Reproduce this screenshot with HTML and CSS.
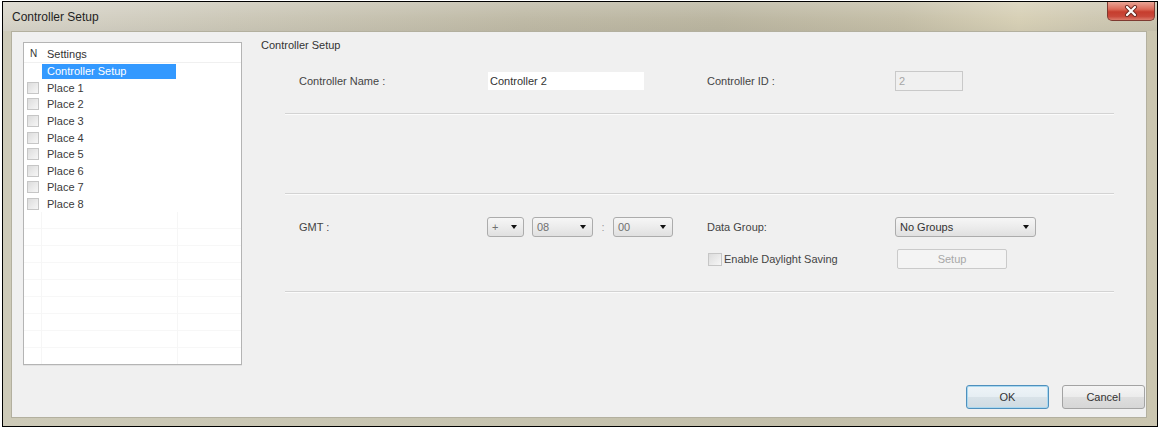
FILE: index.html
```html
<!DOCTYPE html>
<html>
<head>
<meta charset="utf-8">
<title>Controller Setup</title>
<link rel="stylesheet" href="styles.css">
</head>
<body>
<div class="window">
  <div class="titlebar">
    <span class="title">Controller Setup</span>
    <div class="close">
      <svg width="14" height="12" viewBox="0 0 14 12">
        <path d="M3 2 L11 10 M11 2 L3 10" stroke="#6b2a22" stroke-width="4" stroke-linecap="round"/>
        <path d="M3 2 L11 10 M11 2 L3 10" stroke="#ffffff" stroke-width="2.2" stroke-linecap="round"/>
      </svg>
    </div>
  </div>
  <div class="frame">
    <div class="client">
      <div class="listbox">
        <div class="lb-header"><span class="col-n">N</span><span class="col-name">Settings</span></div>
        <div class="lb-row"><span class="sel">Controller Setup</span></div>
        <div class="lb-row"><span class="cb"></span><span class="lb-text">Place 1</span></div>
        <div class="lb-row"><span class="cb"></span><span class="lb-text">Place 2</span></div>
        <div class="lb-row"><span class="cb"></span><span class="lb-text">Place 3</span></div>
        <div class="lb-row"><span class="cb"></span><span class="lb-text">Place 4</span></div>
        <div class="lb-row"><span class="cb"></span><span class="lb-text">Place 5</span></div>
        <div class="lb-row"><span class="cb"></span><span class="lb-text">Place 6</span></div>
        <div class="lb-row"><span class="cb"></span><span class="lb-text">Place 7</span></div>
        <div class="lb-row"><span class="cb"></span><span class="lb-text">Place 8</span></div>
        <div class="lb-fill"></div>
      </div>
      <div class="main">
        <div class="section-title">Controller Setup</div>
        <div class="form-row row1">
          <span class="label">Controller Name :</span>
          <div class="text-input">Controller 2</div>
          <span class="label">Controller ID :</span>
          <div class="id-input">2</div>
        </div>
        <div class="sep sep1"></div>
        <div class="sep sep2"></div>
        <div class="form-row row-gmt">
          <span class="label">GMT :</span>
          <div class="gmt-group">
            <div class="select sel-sign muted"><span>+</span><span class="arrow"></span></div>
            <div class="select sel-hour muted"><span>08</span><span class="arrow"></span></div>
            <span class="colon">:</span>
            <div class="select sel-min muted"><span>00</span><span class="arrow"></span></div>
          </div>
          <span class="label">Data Group:</span>
          <div class="select sel-group"><span>No Groups</span><span class="arrow"></span></div>
        </div>
        <div class="form-row row-dst">
          <span></span>
          <span></span>
          <div class="check-label"><span class="cb cb-dst"></span><span>Enable Daylight Saving</span></div>
          <div class="btn-disabled">Setup</div>
        </div>
        <div class="sep sep3"></div>
        <div class="buttons">
          <div class="btn btn-default">OK</div>
          <div class="btn">Cancel</div>
        </div>
      </div>
    </div>
  </div>
</div>
</body>
</html>
```
FILE: styles.css
```css
html, body {
  margin: 0;
  padding: 0;
  background: #ffffff;
}

body {
  font-family: "Liberation Sans", Arial, sans-serif;
  font-size: 11px;
  color: #3a3a3a;
}

.window {
  box-sizing: border-box;
  width: 1156px;
  height: 426px;
  margin: 1px 0 0 2px;
  border: 1px solid #000;
  display: flex;
  flex-direction: column;
  background: linear-gradient(90deg, #cdcab8 0%, #c7c4b0 40%, #c3bfaa 70%, #cbc6b0 100%);
}

.titlebar {
  height: 29px;
  flex: none;
  display: flex;
  justify-content: space-between;
  align-items: flex-start;
  background:
    linear-gradient(180deg, rgba(255,255,255,0.18) 0%, rgba(255,255,255,0) 60%, rgba(0,0,0,0.03) 100%),
    linear-gradient(90deg, #d8d5ca 0%, #ccc8b8 20%, #bfbaa6 45%, #bbb6a1 62%, #c5bfa8 78%, #d7d0b6 88%, #cfc9b3 94%, #cac5b0 100%);
}

.title {
  padding: 8px 0 0 9px;
  font-size: 12px;
  line-height: 14px;
  color: #1f1f1f;
}

.close {
  box-sizing: border-box;
  width: 48px;
  height: 19px;
  margin-right: 2px;
  border: 1px solid #7e3a30;
  border-top: none;
  border-radius: 0 0 5px 5px;
  background: linear-gradient(180deg, #e9a596 0%, #dc6a58 40%, #c63d2e 55%, #c9483a 80%, #dc7a6a 100%);
  display: flex;
  align-items: center;
  justify-content: center;
}

.frame {
  flex: 1;
  display: flex;
  padding: 0 10px 8px 8px;
  min-height: 0;
}

.client {
  flex: 1;
  display: flex;
  background: #f0f0f0;
  border: 1px solid #b3b09f;
  padding: 0 0 8px 11px;
  min-width: 0;
}

/* ---------- list box ---------- */
.listbox {
  box-sizing: border-box;
  width: 219px;
  height: 323px;
  margin-top: 10px;
  flex: none;
  background: #ffffff;
  border: 1px solid #b4b4b4;
  display: flex;
  flex-direction: column;
  box-shadow: 0 1px 0 #e2e2e2;
}

.lb-header {
  box-sizing: border-box;
  height: 20px;
  display: flex;
  align-items: center;
  border-bottom: 1px solid #f0f0f0;
  color: #333;
}

.col-n {
  width: 23px;
  padding-left: 6px;
  box-sizing: border-box;
  font-size: 10px;
  padding-top: 2px;
}

.col-name {
  padding-top: 2px;
}

.lb-row {
  height: 16.6px;
  display: flex;
  align-items: center;
  flex: none;
}

.sel {
  box-sizing: border-box;
  margin-left: 18px;
  width: 134px;
  height: 15px;
  line-height: 15px;
  padding-left: 5px;
  background: #3399ff;
  color: #ffffff;
}

.cb {
  box-sizing: border-box;
  width: 12px;
  height: 12px;
  margin-left: 3px;
  border: 1px solid #c6c6c6;
  background: linear-gradient(135deg, #dcdcdc 0%, #ececec 60%, #f6f6f6 100%);
  flex: none;
}

.lb-text {
  margin-left: 8px;
  color: #3a3a3a;
}

.lb-fill {
  flex: 1;
  background-image:
    linear-gradient(90deg, transparent 17px, #f6f6f6 17px, #f6f6f6 18px, transparent 18px, transparent 153px, #f6f6f6 153px, #f6f6f6 154px, transparent 154px),
    repeating-linear-gradient(180deg, transparent 0, transparent 16px, #f7f7f7 16px, #f7f7f7 17px);
}

/* ---------- main panel ---------- */
.main {
  flex: 1;
  margin-left: 19px;
  padding-right: 1px;
  display: flex;
  flex-direction: column;
  min-width: 0;
}

.section-title {
  margin-top: 6px;
  line-height: 14px;
  color: #333;
}

.form-row {
  display: grid;
  grid-template-columns: 187px 221px 188px 1fr;
  align-items: center;
  padding-left: 38px;
  height: 20px;
}

.row1 {
  margin-top: 18px;
  height: 21px;
}

.label {
  color: #444;
}

.text-input {
  box-sizing: border-box;
  width: 156px;
  height: 18px;
  margin-left: 2px;
  padding-left: 2px;
  line-height: 18px;
  background: #ffffff;
  color: #333;
}

.id-input {
  box-sizing: border-box;
  width: 68px;
  height: 20px;
  line-height: 18px;
  padding-left: 3px;
  border: 1px solid #c9c9c9;
  background: #f0f0f0;
  color: #a6a6a6;
}

.sep {
  margin-left: 24px;
  width: 829px;
  height: 0;
  border-top: 1px solid #d3d3d3;
  border-bottom: 1px solid #fbfbfb;
}

.sep1 { margin-top: 22px; }
.sep2 { margin-top: 78px; }
.sep3 { margin-top: 22px; }

.row-gmt { margin-top: 22px; }
.row-dst { margin-top: 12px; }

.gmt-group {
  display: flex;
  align-items: center;
  margin-left: 1px;
}

.select {
  box-sizing: border-box;
  height: 20px;
  border: 1px solid #acacac;
  border-radius: 3px;
  background: linear-gradient(180deg, #f6f6f6 0%, #ececec 50%, #e0e0e0 100%);
  display: flex;
  align-items: center;
  justify-content: space-between;
  padding: 0 6px 0 4px;
  color: #333;
}

.select.muted { color: #707070; }

.sel-sign { width: 37px; }
.sel-hour { width: 61px; margin-left: 8px; }
.sel-min { width: 60px; }
.sel-group { width: 141px; }

.colon {
  width: 20px;
  text-align: center;
  color: #9a9a9a;
}

.arrow {
  width: 0;
  height: 0;
  border-left: 3.5px solid transparent;
  border-right: 3.5px solid transparent;
  border-top: 4px solid #111;
}

.check-label {
  display: flex;
  align-items: center;
  color: #444;
}

.cb-dst {
  width: 14px;
  height: 13px;
  margin-left: 1px;
  margin-right: 2px;
}

.btn-disabled {
  box-sizing: border-box;
  width: 110px;
  height: 20px;
  margin-left: 2px;
  border: 1px solid #cacaca;
  border-radius: 2px;
  background: #f4f4f4;
  color: #a8a8a8;
  text-align: center;
  line-height: 18px;
}

.buttons {
  margin-top: auto;
  display: flex;
  justify-content: flex-end;
  gap: 13px;
}

.btn {
  box-sizing: border-box;
  width: 83px;
  height: 24px;
  border: 1px solid #a3a3a3;
  border-radius: 3px;
  background: linear-gradient(180deg, #f5f5f5 0%, #ececec 48%, #dedede 52%, #d6d6d6 100%);
  color: #333;
  text-align: center;
  line-height: 22px;
}

.btn-default {
  border-color: #4f90bd;
  box-shadow: inset 0 0 0 1px #a9d8f0;
  background: linear-gradient(180deg, #eef4f8 0%, #e6eef3 48%, #d8e2e8 52%, #d0dbe2 100%);
}
```
